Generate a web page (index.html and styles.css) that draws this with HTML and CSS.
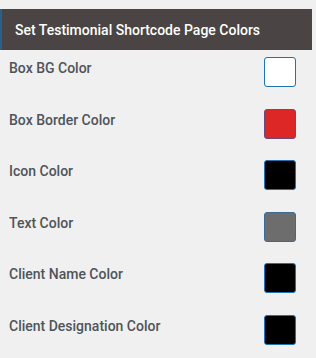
FILE: index.html
```html
<!DOCTYPE html>
<html lang="en">
<head>
    <meta charset="UTF-8">
    <meta name="viewport" content="width=device-width, initial-scale=1.0">
    <title>Testimonial Colors</title>
    <link rel="stylesheet" href="styles.css">
</head>
<body>
    <div class="panel">
        <h2 class="panel-title">Set Testimonial Shortcode Page Colors</h2>

        <div class="color-list">
            <div class="color-row">
                <label>Box BG Color</label>
                <span class="swatch swatch-white"></span>
            </div>
            <div class="color-row">
                <label>Box Border Color</label>
                <span class="swatch swatch-red"></span>
            </div>
            <div class="color-row">
                <label>Icon Color</label>
                <span class="swatch swatch-black"></span>
            </div>
            <div class="color-row">
                <label>Text Color</label>
                <span class="swatch swatch-gray"></span>
            </div>
            <div class="color-row">
                <label>Client Name Color</label>
                <span class="swatch swatch-black"></span>
            </div>
            <div class="color-row">
                <label>Client Designation Color</label>
                <span class="swatch swatch-black"></span>
            </div>
        </div>
    </div>
</body>
</html>
```

FILE: styles.css
```css
body {
    font-family: Roboto, "Liberation Sans", sans-serif;
    margin: 0;
    background-color: #f0f0f0;
}

.panel {
    width: 312px;
    padding-top: 9px;
}

.panel-title {
    margin: 0;
    height: 41px;
    box-sizing: border-box;
    padding-left: 13px;
    display: flex;
    align-items: center;
    background: #4a4544;
    border-left: 2px solid #2a5f8a;
    color: #ffffff;
    font-size: 14px;
    font-weight: 500;
}

.color-list {
    padding-top: 7px;
}

.color-row {
    height: 51.6px;
    display: flex;
    justify-content: space-between;
    padding: 0 16px 0 9px;
}

.color-row label {
    color: #4f5459;
    font-size: 14px;
    font-weight: 500;
    margin-top: 3px;
}

.swatch {
    width: 30px;
    height: 28px;
    border: 1px solid #2271b1;
    border-radius: 3px;
}

.swatch-white {
    background: #ffffff;
}

.swatch-red {
    background: #dd2626;
    border-color: #6e4a78;
}

.swatch-black {
    background: #000000;
}

.swatch-gray {
    background: #6d6d6d;
    border-color: #3d6a93;
}
```
